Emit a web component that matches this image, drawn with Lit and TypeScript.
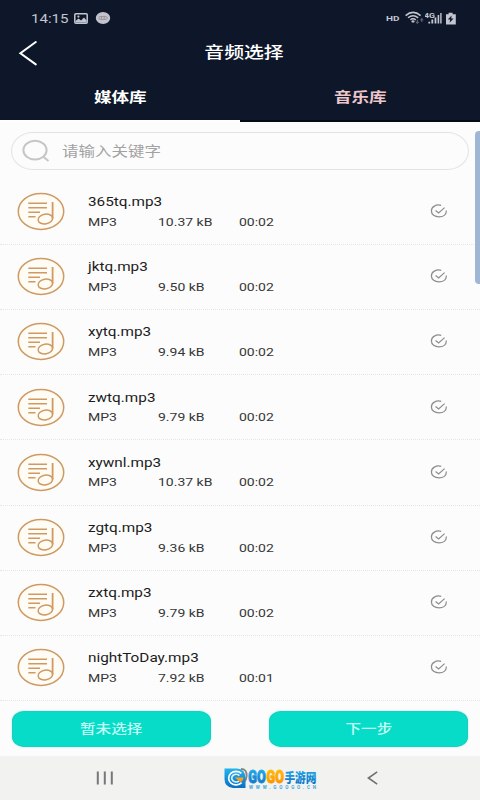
import { LitElement, html, css, svg } from "lit";
import { customElement, property, state } from "lit/decorators.js";

interface Track {
  name: string;
  size: string;
  time: string;
}

const TRACKS: Track[] = [
  { name: "365tq.mp3", size: "10.37 kB", time: "00:02" },
  { name: "jktq.mp3", size: "9.50 kB", time: "00:02" },
  { name: "xytq.mp3", size: "9.94 kB", time: "00:02" },
  { name: "zwtq.mp3", size: "9.79 kB", time: "00:02" },
  { name: "xywnl.mp3", size: "10.37 kB", time: "00:02" },
  { name: "zgtq.mp3", size: "9.36 kB", time: "00:02" },
  { name: "zxtq.mp3", size: "9.79 kB", time: "00:02" },
  { name: "nightToDay.mp3", size: "7.92 kB", time: "00:01" },
];

// Wide lettering shared by every element.
const wide = css`
  .w {
    display: inline-block;
    white-space: nowrap;
    transform: scaleX(1.24);
    transform-origin: left center;
  }
  .w.mid {
    transform-origin: center;
  }
  svg {
    display: block;
    flex: none;
  }
`;

@customElement("status-bar")
export class StatusBar extends LitElement {
  static styles = [
    wide,
    css`
      :host {
        display: flex;
        align-items: center;
        height: 36px;
        padding: 0 23px 0 31px;
        box-sizing: border-box;
        color: #c3c6d0;
      }
      .clock {
        width: 43px;
        font-size: 13px;
        line-height: 36px;
        padding-top: 1px;
      }
      .clock .w {
        transform: scaleX(1.16);
      }
      .gap {
        flex: 1;
      }
      .hd {
        width: 19px;
        font-size: 8px;
        font-weight: 700;
      }
    `,
  ];

  render() {
    return html`
      <div class="clock"><span class="w">14:15</span></div>
      <svg width="14" height="11" viewBox="0 0 14 11">
        <rect x="0.8" y="0.8" width="12.4" height="9.4" rx="1" fill="none" stroke="#c3c6d0" stroke-width="1.5" />
        <path d="M1.5 9 L1.5 8 L4.5 5.6 L7 7.4 L10 4.6 L12.6 7.4 V9.4 H1.5Z" fill="#c3c6d0" />
        <circle cx="4.4" cy="3.6" r="1.1" fill="#c3c6d0" />
      </svg>
      <svg width="23" height="12" viewBox="0 0 23 12">
        <ellipse cx="15" cy="6" rx="7.2" ry="5.9" fill="#c3c3cb" />
        <rect x="11" y="4.6" width="8" height="2.8" rx="1" fill="none" stroke="#8c8c96" stroke-width="0.8" />
        <path d="M13.6 4.6V7.4M16.2 4.6V7.4" stroke="#8c8c96" stroke-width="0.8" />
      </svg>
      <div class="gap"></div>
      <div class="hd"><span class="w">HD</span></div>
      <svg width="20" height="14" viewBox="0 0 20 14">
        <g fill="none" stroke="#c3c6d0" stroke-width="1.5">
          <path d="M0.6 4.6 Q8 -1.8 15.6 4.6" />
          <path d="M3 6.8 Q8 2.6 13.2 6.8" />
          <path d="M5.4 8.8 Q8 6.6 10.8 8.8" />
        </g>
        <ellipse cx="8" cy="10.4" rx="1.5" ry="1.2" fill="#c3c6d0" />
        <path d="M12.3 8.8v3.4M10.8 11l1.5 1.4 1.5-1.4M16.8 11v-3.4M15.3 9l1.5-1.4 1.5 1.4" stroke="#6c7280" fill="none" />
      </svg>
      <svg width="20" height="14" viewBox="0 0 20 14">
        <text x="-1" y="7" font-size="7.6" font-weight="700" fill="#c3c6d0" textLength="11" lengthAdjust="spacingAndGlyphs">4G</text>
        <path d="M3.4 10.8h1.8v1.7H3.4zM6.4 8.6h1.8v3.9H6.4zM9.6 6.6h1.8v5.9H9.6zM12.6 4h1.6v8.5h-1.6zM15.2 2h1.4v10.5h-1.4z" fill="#c3c6d0" />
      </svg>
      <svg width="12" height="13" viewBox="0 0 12 13">
        <path d="M3.6 0.8h4v1.4h3.2v10.3H1V2.2h2.6z" fill="#c3c6d0" />
        <path d="M6.6 3.6 2.8 7.6h2.4l-0.6 3.2L8.6 6.6H6.2z" fill="#10172a" />
      </svg>
    `;
  }
}

@customElement("track-row")
export class TrackRow extends LitElement {
  @property({ attribute: false }) track!: Track;

  static styles = [
    wide,
    css`
      :host {
        display: flex;
        height: 65.2px;
        box-sizing: border-box;
        border-bottom: 1px dotted #e6e6e6;
        padding: 12.5px 32px 0 17px;
        color: #1c1c1c;
      }
      .info {
        flex: 1;
        padding-left: 23px;
      }
      .name {
        font-size: 12.5px;
        line-height: 20px;
      }
      .name .w {
        transform: scaleX(1.225);
      }
      .meta {
        display: grid;
        grid-template-columns: 70px 81px 1fr;
        font-size: 11.2px;
        line-height: 20px;
        color: #363636;
        padding-top: 0.6px;
      }
      .meta .w {
        transform: scaleX(1.25);
      }
      .check {
        margin-top: 12px;
      }
    `,
  ];

  render() {
    const t = this.track;
    return html`
      <svg width="48" height="39" viewBox="0 0 48 39">
        <ellipse cx="24" cy="19.4" rx="22.7" ry="18" fill="#fffcf6" stroke="#cf9a62" stroke-width="1.5" />
        <g fill="none" stroke="#cf9a62" stroke-width="1.5">
          <path d="M11.3 11.2H30M11.3 15.8H30M11.3 20.3H23M11.3 24.8H18.5" />
          <path d="M35.6 10V26.5" stroke-width="1.8" />
          <ellipse cx="28.4" cy="27" rx="7.3" ry="4.9" transform="rotate(-10 28.4 27)" />
        </g>
      </svg>
      <div class="info">
        <div class="name"><span class="w">${t.name}</span></div>
        <div class="meta">
          <div><span class="w">MP3</span></div>
          <div><span class="w">${t.size}</span></div>
          <div><span class="w">${t.time}</span></div>
        </div>
      </div>
      <svg class="check" width="18" height="14" viewBox="0 0 18 14" fill="none" stroke="#8d8d8d" stroke-width="1.25">
        <path d="M11.2 1.3 C6 0 1.4 2.8 1.4 7 C1.4 10.6 4.8 12.9 9 12.9 C13.2 12.9 16.4 10.6 16.4 6.4" />
        <path d="M5.6 6.6 8.6 8.9 14.6 3.6" />
      </svg>
    `;
  }
}

@customElement("app-root")
export class AppRoot extends LitElement {
  @state() private tab = 0;

  static styles = [
    wide,
    css`
      :host {
        display: flex;
        flex-direction: column;
        position: relative;
        width: 480px;
        height: 800px;
        overflow: hidden;
        background: #fcfcfc;
        font-family: Roboto, "Noto Sans CJK SC", sans-serif;
      }
      .top {
        height: 122px;
        background: #0e172a;
        color: #fff;
        flex: none;
      }
      .title {
        display: grid;
        grid-template-columns: 60px 1fr 51px;
        align-items: center;
        height: 32px;
        text-align: center;
        font-size: 16px;
        line-height: 32px;
        font-weight: 500;
      }
      .title div {
        padding-top: 1px;
      }
      .title svg {
        margin-left: 18px;
      }
      .tabs {
        display: grid;
        grid-template-columns: 1fr 1fr;
        height: 54px;
      }
      .tab {
        box-sizing: border-box;
        text-align: center;
        font-size: 14.2px;
        font-weight: 700;
        line-height: 59px;
        height: 54px;
        color: #ecc6c8;
        border-bottom: 2px solid #050a14;
      }
      .tab.on {
        color: #fff;
        border-bottom-color: #fff;
      }
      .search {
        flex: none;
        display: flex;
        align-items: center;
        box-sizing: border-box;
        height: 38px;
        margin: 10px 11px 9.6px;
        padding-left: 10px;
        border: 1px solid #e2e2e2;
        border-radius: 22px / 19px;
        color: #a2a2a2;
        font-size: 13.3px;
      }
      .search .w {
        margin: 0 0 2px 11px;
      }
      .list {
        flex: none;
        height: 522px;
      }
      .actions {
        flex: none;
        display: flex;
        justify-content: space-between;
        height: 54.4px;
        padding: 9.4px 12px 0;
        box-sizing: border-box;
      }
      .btn {
        width: 199px;
        height: 36px;
        box-sizing: border-box;
        border: 1px solid #1bcdbb;
        border-radius: 12px / 10px;
        background: #06dcc8;
        box-shadow: 0 0 2px #8ff3e8;
        color: #c4fff6;
        text-align: center;
        font-size: 12.6px;
        font-weight: 500;
        line-height: 34px;
      }
      .nav {
        flex: 1;
        display: flex;
        align-items: center;
        background: #f2f2f0;
        padding: 0 101px 0 96px;
      }
      .nav .recent {
        margin-right: 110px;
      }
      .nav .back {
        margin-left: auto;
      }
      .thumb {
        position: absolute;
        right: 0;
        top: 131px;
        width: 5px;
        height: 153px;
        border-radius: 4px 0 0 4px;
        background: #9fb6d4;
      }
      .brand {
        margin-top: 3px;
      }
    `,
  ];

  private brand() {
    return svg`
      <defs>
        <linearGradient id="blue" x1="0" y1="0" x2="0" y2="1">
          <stop offset="0" stop-color="#23b4ee" /><stop offset="1" stop-color="#0a6fc4" />
        </linearGradient>
        <linearGradient id="gold" x1="0" y1="0" x2="0" y2="1">
          <stop offset="0" stop-color="#ffc400" /><stop offset="1" stop-color="#ff8a00" />
        </linearGradient>
      </defs>
      <path d="M17 4 Q23 4 22.6 11 Q22.3 15 20 17" fill="none" stroke="#8a8580" stroke-width="2" />
      <path d="M0.5 3.5H13Q21.5 4 21.5 13.5V23H9Q0.5 22 0.5 14Z" fill="url(#blue)" />
      <path d="M17.4 8.4A7.4 6.8 0 1 0 17.6 17.6" fill="none" stroke="#fff" stroke-width="1.7" />
      <path d="M15.4 10.6A4.4 3.8 0 1 0 15 16" fill="none" stroke="#d8f2ff" stroke-width="1.7" />
      <path d="M10.5 12.5H19.5Q19 16.5 16 17L14 15Z" fill="#ff9d1c" />
      <g font-family="Roboto, sans-serif" font-weight="900" font-size="17.5" stroke-width="0.9">
        <text x="24.3" y="17.8" fill="url(#blue)" stroke="url(#blue)" textLength="17.4" lengthAdjust="spacingAndGlyphs">GO</text>
        <text x="42.6" y="17.8" fill="url(#gold)" stroke="url(#gold)" textLength="17.4" lengthAdjust="spacingAndGlyphs">GO</text>
      </g>
      <text x="60.4" y="16.6" font-size="13" font-weight="900" font-family="'Noto Sans CJK SC', sans-serif" fill="url(#blue)" textLength="32" lengthAdjust="spacingAndGlyphs">手游网</text>
      <text x="25" y="23.7" font-size="4.6" font-weight="700" font-family="Roboto, sans-serif" fill="#3aa7e2" textLength="67">WWW.GOOGO.CN</text>
    `;
  }

  render() {
    const tabs = ["媒体库", "音乐库"];
    return html`
      <div class="top">
        <status-bar></status-bar>
        <div class="title">
          <svg width="20" height="26" viewBox="0 0 20 26">
            <path d="M17.8 2 2.4 13.2 17.8 24.4" fill="none" stroke="#fff" stroke-width="2" stroke-linecap="round" />
          </svg>
          <div><span class="w mid">音频选择</span></div>
        </div>
        <div class="tabs">
          ${tabs.map(
            (label, i) => html`<div class="tab ${i === this.tab ? "on" : ""}" @click=${() => (this.tab = i)}>
              <span class="w mid">${label}</span>
            </div>`
          )}
        </div>
      </div>
      <div class="search">
        <svg width="29" height="24" viewBox="0 0 29 24" fill="none" stroke="#c6c6c6" stroke-width="2">
          <ellipse cx="13" cy="11.2" rx="11.6" ry="9.4" />
          <path d="M21 17.4 26.5 22" />
        </svg>
        <span class="w">请输入关键字</span>
      </div>
      <div class="list">${TRACKS.map((t) => html`<track-row .track=${t}></track-row>`)}</div>
      <div class="actions">
        <div class="btn"><span class="w mid">暂未选择</span></div>
        <div class="btn"><span class="w mid">下一步</span></div>
      </div>
      <div class="nav">
        <svg class="recent" width="18" height="14" viewBox="0 0 18 14">
          <path d="M1.8 0.5V13.5M8.8 0.5V13.5M15.8 0.5V13.5" stroke="#77777b" stroke-width="2" />
        </svg>
        <svg class="brand" width="96" height="28" viewBox="0 0 96 28">${this.brand()}</svg>
        <svg class="back" width="12" height="14" viewBox="0 0 12 14">
          <path d="M10.2 0.8 1.4 7 10.2 13.2" fill="none" stroke="#707070" stroke-width="1.6" />
        </svg>
      </div>
      <div class="thumb"></div>
    `;
  }
}
